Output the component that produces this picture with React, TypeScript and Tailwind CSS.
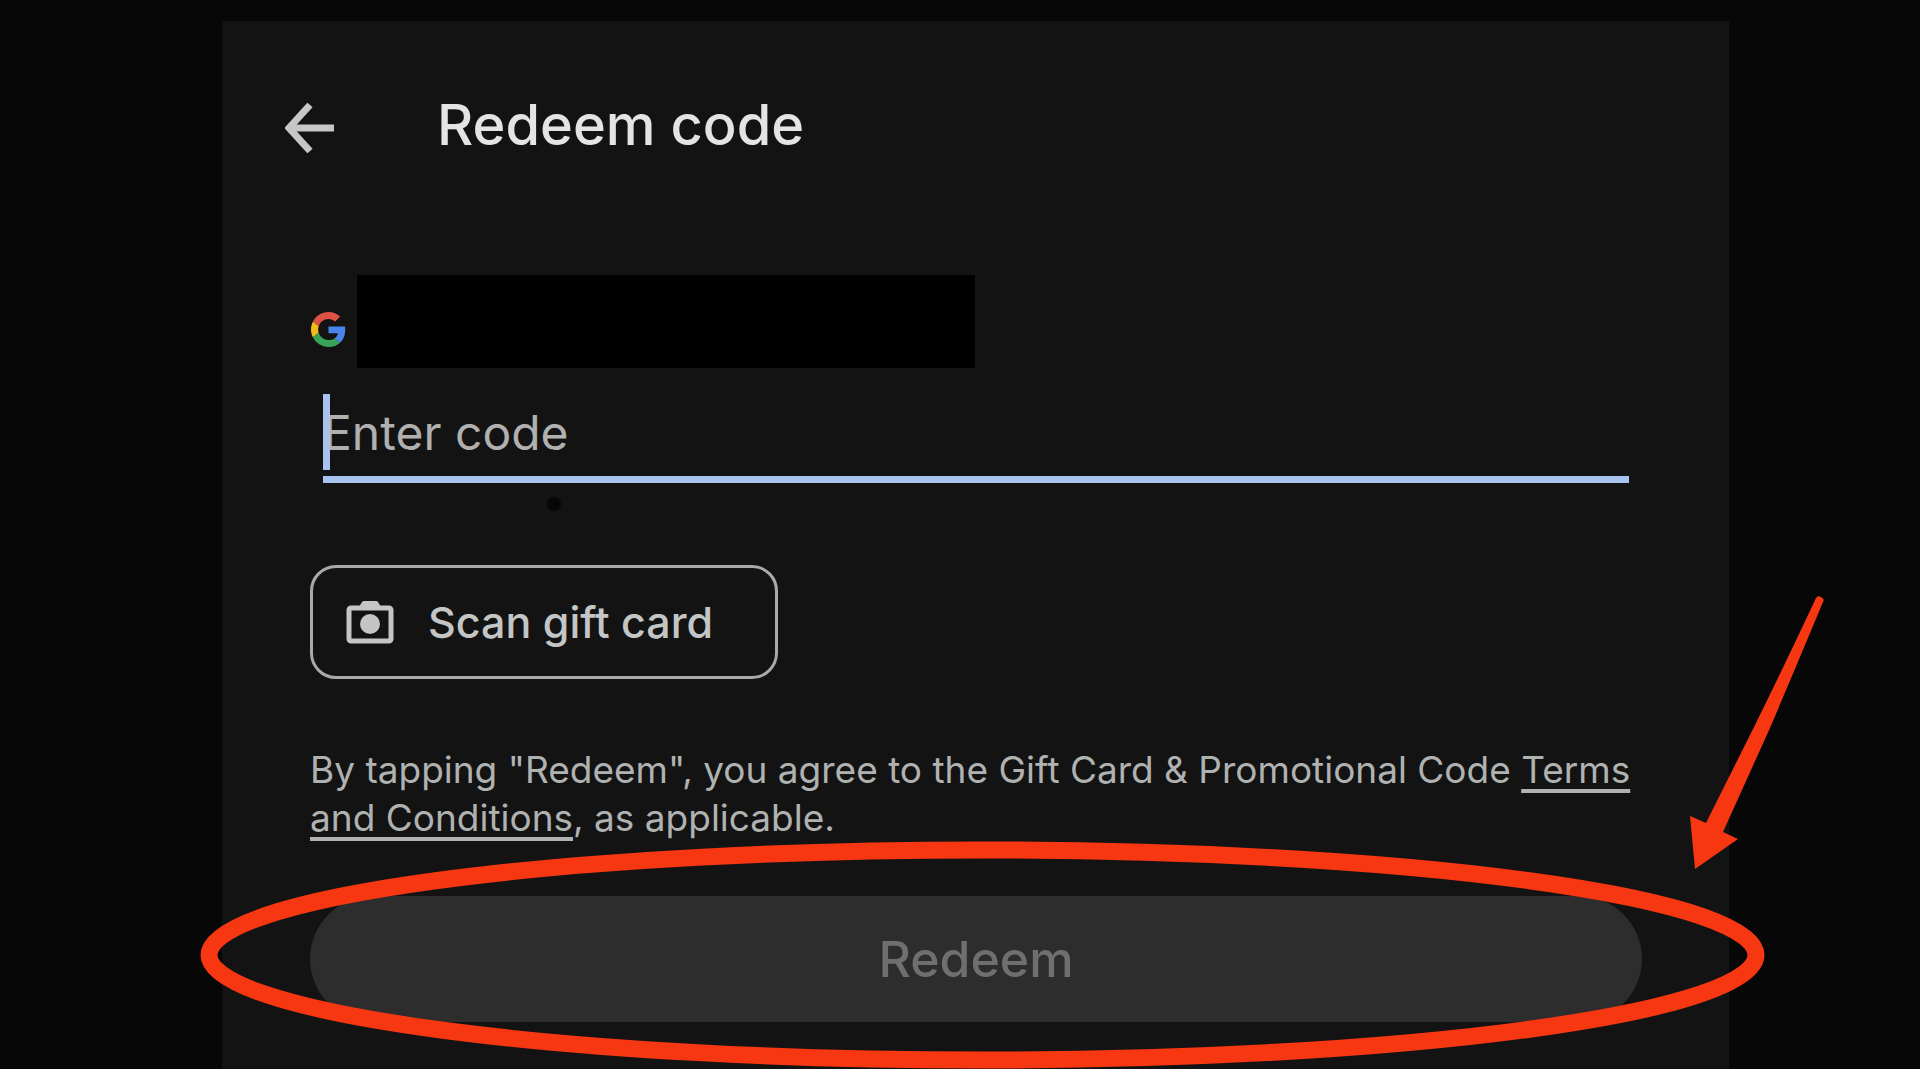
import React, { useState } from 'react'

function BackArrow() {
  return (
    <svg width="50" height="50" viewBox="0 0 50 50" fill="none" stroke="currentColor" strokeWidth="7" aria-hidden="true">
      <path d="M49 25H6" />
      <path d="M25 2L4 25L25 48" />
    </svg>
  )
}

function GoogleLogo() {
  return (
    <svg width="35" height="35" viewBox="0 0 48 48" aria-label="Google">
      <path fill="#de5145" d="M24 9.5c3.54 0 6.71 1.22 9.21 3.6l6.85-6.85C35.9 2.38 30.47 0 24 0 14.62 0 6.51 5.38 2.56 13.22l7.98 6.19C12.43 13.72 17.74 9.5 24 9.5z" />
      <path fill="#4a83ea" d="M46.98 24.55c0-1.57-.15-3.09-.38-4.55H24v9.02h12.94c-.58 2.96-2.26 5.48-4.78 7.18l7.73 6c4.51-4.18 7.09-10.36 7.09-17.65z" />
      <path fill="#f2bb18" d="M10.53 28.59c-.48-1.45-.76-2.99-.76-4.59s.27-3.14.76-4.59l-7.98-6.19C.92 16.46 0 20.12 0 24c0 3.88.92 7.54 2.56 10.78l7.97-6.19z" />
      <path fill="#3aa257" d="M24 48c6.48 0 11.93-2.13 15.89-5.81l-7.73-6c-2.15 1.45-4.92 2.3-8.16 2.3-6.26 0-11.57-4.22-13.47-9.91l-7.98 6.19C6.51 42.62 14.62 48 24 48z" />
    </svg>
  )
}

function CameraIcon() {
  return (
    <svg width="48" height="44" viewBox="0 0 48 44" aria-hidden="true">
      <path d="M13 7L16 2Q17 1 18 1H30Q31 1 32 2L35 7Z" fill="currentColor" />
      <rect x="3" y="8" width="42" height="33" rx="2" fill="none" stroke="currentColor" strokeWidth="5" />
      <circle cx="24" cy="24" r="10" fill="currentColor" />
    </svg>
  )
}

// Hand-drawn style ring around the redeem button
function HighlightRing() {
  return (
    <div className="pointer-events-none absolute -top-[46px] -right-[114px] -bottom-[38px] -left-[101px]">
      <svg className="h-full w-full overflow-visible" aria-hidden="true">
        <ellipse cx="50%" cy="50%" rx="50%" ry="50%" fill="none" stroke="#f73612" strokeWidth="17" />
      </svg>
    </div>
  )
}

function HighlightArrow() {
  return (
    <svg
      className="pointer-events-none absolute top-[596px] right-24"
      width="134"
      height="274"
      viewBox="0 0 134 274"
      fill="#f73612"
      aria-hidden="true"
    >
      <path d="M0 220L16 227L66 127Q98 62 126 2Q128 -1 131 1Q135 3 133 6Q108 66 80 132L33 236L48 243L5 273Z" />
    </svg>
  )
}

export default function App() {
  const [code, setCode] = useState('')

  return (
    <div className="flex min-h-screen flex-col bg-white font-['Inter',sans-serif]">
      <div className="relative flex flex-1 flex-col overflow-hidden bg-[#070707] pt-[21px] pr-[191px] pl-[222px]">
        <main className="flex-1 bg-[#131313] pt-[76px] pr-[87px] pb-[47px] pl-[88px]">
          <header className="-ml-[25px] flex items-end gap-[102px]">
            <button type="button" className="text-[#c6c8c7]" aria-label="Back">
              <BackArrow />
            </button>
            <h1 className="text-[56px] leading-[56px] font-medium text-[#e4e4e4]">Redeem code</h1>
          </header>

          <section className="mt-[122px] flex items-end gap-[11px]">
            <div className="pb-[21px] pl-px">
              <GoogleLogo />
            </div>
            <div className="h-[93px] w-[618px] bg-black" />
          </section>

          <div className="relative mx-[13px] mt-[26px]">
            <input
              type="text"
              aria-label="Enter code"
              placeholder="Enter code"
              value={code}
              onChange={(e) => setCode(e.target.value)}
              className="block h-[89px] w-full border-b-7 border-[#a8c3ee] bg-transparent pb-[6px] text-[48px] text-[#e4e4e4] caret-transparent outline-none placeholder:text-[#b0b0b0]"
            />
            <span className="absolute top-0 left-0 h-[76px] w-[7px] bg-[#a8c3ee]" />
            <span className="absolute top-[103px] left-[224px] size-[14px] rounded-full bg-[#070707]" />
          </div>

          <button
            type="button"
            className="mt-[82px] flex h-[114px] w-[468px] items-center gap-[34px] rounded-[26px] border-3 border-[#a9a9a9] pl-[33px] text-[43px] font-medium text-[#c4c6c5]"
          >
            <CameraIcon />
            Scan gift card
          </button>

          <p className="mt-[67px] text-[37px] leading-[48px] text-[#b0b2b1]">
            By tapping "Redeem", you agree to the Gift Card &amp; Promotional Code{' '}
            <a href="#terms" className="underline decoration-[4px] underline-offset-[6px] [text-decoration-skip-ink:none]">
              Terms and Conditions
            </a>
            , as applicable.
          </p>

          <div className="relative mt-[54px]">
            <button
              type="button"
              disabled
              className="h-[126px] w-full rounded-full bg-[#2d2d2d] text-[50px] font-medium text-[#6f6f6f]"
            >
              Redeem
            </button>
            <HighlightRing />
          </div>
        </main>
        <HighlightArrow />
      </div>
      <div className="h-[11px]" />
    </div>
  )
}
